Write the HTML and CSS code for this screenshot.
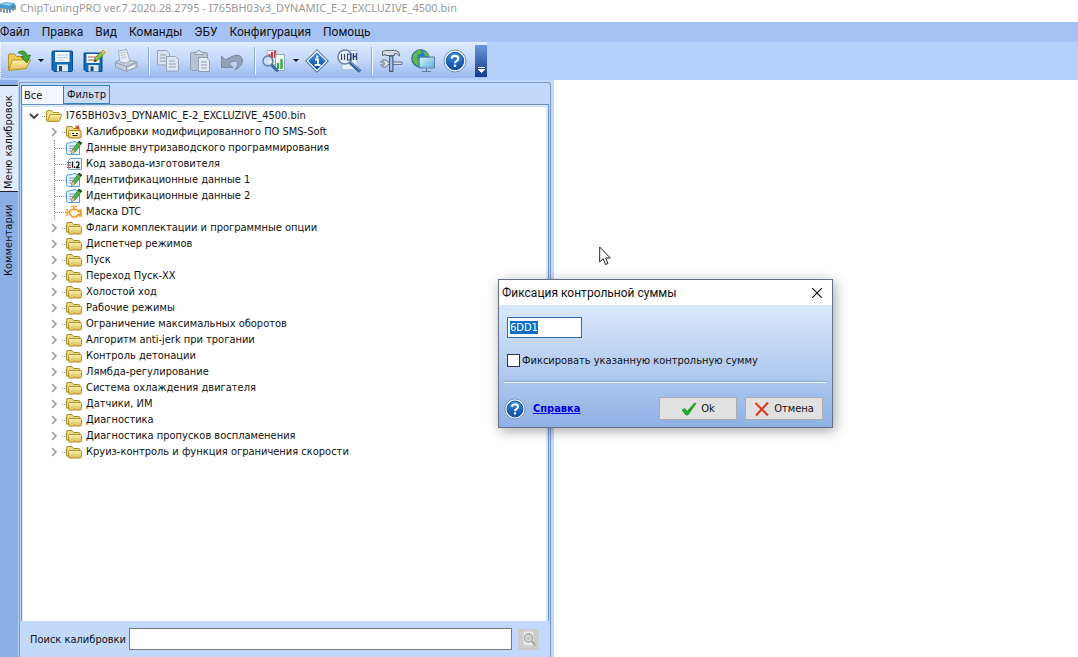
FILE: index.html
```
<!DOCTYPE html>
<html lang="ru">
<head>
  <meta charset="utf-8">
  <title>ChipTuningPRO</title>
  <link rel="stylesheet" href="styles.css">
</head>
<body>

  <!-- shared icons -->
  <svg class="defs" aria-hidden="true">
    <defs>
      <linearGradient id="gFolder" x1="0" y1="0" x2="0" y2="1">
        <stop offset="0" stop-color="#fdf6ae"/>
        <stop offset="1" stop-color="#e0bb4c"/>
      </linearGradient>
      <linearGradient id="gBlue" x1="0" y1="0" x2="0" y2="1">
        <stop offset="0" stop-color="#3c8fdc"/>
        <stop offset="1" stop-color="#0a4aa6"/>
      </linearGradient>
      <linearGradient id="gScreen" x1="0" y1="0" x2="1" y2="1">
        <stop offset="0" stop-color="#d5f0fc"/>
        <stop offset="1" stop-color="#5fb4dc"/>
      </linearGradient>
    </defs>
    <symbol id="folder" viewBox="0 0 16 16">
      <path d="M.5 12V4q0-1.500 1.500-1.500h4l1.500 2h5q1.500 0 1.500 1.500v6z" fill="#f0dc80" stroke="#a38a30"/>
      <path d="M3.500 6.500h11q1 0 1 1v5q0 1.500-1.500 1.500H3.500q-1 0-1-1V7.500q0-1 1-1z" fill="url(#gFolder)" stroke="#a98f35"/>
    </symbol>
    <symbol id="folder-open" viewBox="0 0 16 16">
      <path d="M.5 12.500V4q0-1.500 1.500-1.500h3.500l1.500 2h5q1.500 0 1.500 1.500v2z" fill="#f5e189" stroke="#b1932c"/>
      <path d="M1.500 13.500L4 7q.2-.5 1-.5h10q.8 0 .5.8l-2 5.700q-.2.500-1 .5z" fill="url(#gFolder)" stroke="#b9982c"/>
    </symbol>
    <symbol id="folder-mod" viewBox="0 0 16 16">
      <path d="M.5 12V4q0-1.500 1.500-1.500h4l1.500 2h5q1.500 0 1.500 1.500v6z" fill="#f0dc80" stroke="#a38a30"/>
      <rect x="2.500" y="6.500" width="12.500" height="7.500" rx="1" fill="url(#gFolder)" stroke="#a9862a"/>
      <path d="M5 8h8v4.500H5z" fill="#fff8d8"/>
      <path d="M6 9.500h2M10 9.500h2M6.500 11.500h5" stroke="#222"/>
      <path d="M8.500 1l2 1.500L13 1v4l-2 .5z" fill="#d9402c"/>
    </symbol>
    <symbol id="edit" viewBox="0 0 16 16">
      <path d="M.5 3.500L9 1.500 13.500 4v10.500h-11q-2 0-2-2z" fill="#e4f3fd" stroke="#5a9fd4"/>
      <path d="M3 6h6M3 8.500h4M3 11h3" stroke="#6fa8d2"/>
      <path d="M5.500 13.500l1-4L13 1l3 2-7 9z" fill="#58b043" stroke="#2c6e28" stroke-width=".7"/>
      <path d="M5.500 13.500l1-4L9 12z" fill="#e8c28a"/>
      <path d="M13 .8L16 3l-1.200 1.500-3-2.200z" fill="#24481f"/>
    </symbol>
    <symbol id="num" viewBox="0 0 16 16">
      <path d="M4.500 2.500h11v11h-13v-9z" fill="#eef6fd" stroke="#6da0d0"/>
      <path d="M1 6.500h4" stroke="#3a62a8"/><path d="M1 9h4M1 11.500h4" stroke="#c03838"/>
      <path d="M6.500 5.500v6M8.500 10.500v1.500M10 6.500q3-1.500 3 1T10 11.500h3.500" fill="none" stroke="#111" stroke-width="1.300"/>
    </symbol>
    <symbol id="engine" viewBox="0 0 16 16">
      <path d="M5 2.500h6M8 3v2.500M1 5v7M1 8.500h2.500" stroke="#f2a040" stroke-width="1.500"/>
      <path d="M3.500 7.500l2-2h5l2 2h1V6H15v6h-1.500v-1.500H12L10.500 13h-4l-3-3z" fill="#fff4e0" stroke="#f09a28" stroke-width="1.600"/>
    </symbol>
    <symbol id="help" viewBox="0 0 24 24">
      <circle cx="12" cy="12" r="11" fill="#f4f8fd" stroke="#6f8fb9"/>
      <circle cx="12" cy="12" r="8.700" fill="url(#gBlue)" stroke="#155297"/>
      <path d="M8.700 9.700Q8.800 6.800 12 6.800t3.300 2.700q0 1.500-1.600 2.400T12 14.300" fill="none" stroke="#fff" stroke-width="2.200"/>
      <rect x="10.800" y="15.600" width="2.400" height="2.400" fill="#fff"/>
    </symbol>
    <!-- chevrons with the dotted branch to the folder -->
    <symbol id="right" viewBox="0 0 16 10">
      <path d="M2 1l4 4-4 4" fill="none" stroke="#a0a0a0" stroke-width="1.700"/>
      <path d="M12 5.500h4" stroke="#888" stroke-dasharray="1 1"/>
    </symbol>
    <symbol id="down" viewBox="0 0 17 8">
      <path d="M1 2l4 4 4-4" fill="none" stroke="#404040" stroke-width="1.800"/>
      <path d="M13 4.500h4" stroke="#888" stroke-dasharray="1 1"/>
    </symbol>
  </svg>

  <div class="window">
    <header class="titlebar">
      <svg class="logo" viewBox="0 0 16 16" aria-hidden="true">
        <path d="M0 4l5-2 9 1 2 3-5 4L0 8z" fill="#459bd0"/>
        <path d="M0 4l5-2 9 1-5 3z" fill="#86c9ea"/>
        <path d="M1 8v4M4 8v5M7 9v4M10 9v4M13 7v4M15 6v4" stroke="#4a6b80" stroke-width="1.300"/>
        <path d="M1 9h4" stroke="#d9a832"/>
      </svg>
      <span>ChipTuningPRO ver.7.2020.28.2795 - I765BH03v3_DYNAMIC_E-2_EXCLUZIVE_4500.bin</span>
    </header>

    <nav class="menu">
      <button>Файл</button>
      <button>Правка</button>
      <button>Вид</button>
      <button>Команды</button>
      <button>ЭБУ</button>
      <button>Конфигурация</button>
      <button>Помощь</button>
    </nav>

    <div class="toolbar-row">
      <div class="toolbar">
        <button class="tool" aria-label="Открыть">
          <svg viewBox="0 0 24 24">
            <path d="M1.500 21V6q0-1 1-1h5l2 2.500h8V13" fill="#efcb58" stroke="#b98d2c"/>
            <path d="M1.500 21.500L5.500 11h18l-4.500 8.500z" fill="url(#gFolder)" stroke="#bd8a20"/>
            <path d="M11 3.500q6.500-4 9.500 3l3-.5-3.500 8-6-6 3-.5q-2-3-6-4z" fill="#45a938" stroke="#23751f" stroke-width=".8"/>
          </svg>
        </button>
        <button class="drop" aria-label="Недавние файлы"></button>
        <button class="tool" aria-label="Сохранить">
          <svg viewBox="0 0 24 24">
            <path d="M2 3q0-1 1-1h18.500q1 0 1 1v18.500q0 1-1 1H4l-2-2z" fill="#1269bb" stroke="#0a4a90"/>
            <rect x="5" y="3" width="14.500" height="10" fill="#f5faff"/>
            <path d="M7 6h10.500M7 8.500h10.500M7 11h7" stroke="#a9c6de"/>
            <rect x="7" y="15.500" width="11" height="7" fill="#dfe8ef"/>
            <rect x="9" y="17" width="3" height="5" fill="#154e87"/>
          </svg>
        </button>
        <button class="tool" aria-label="Сохранить как">
          <svg viewBox="0 0 24 24">
            <path d="M2 4h18v18.500H4l-2-2z" fill="#1269bb" stroke="#0a4a90"/>
            <rect x="4.500" y="5" width="13" height="9" fill="#f5faff"/>
            <path d="M6 8h9M6 11h6" stroke="#be5544"/>
            <rect x="6.500" y="16" width="10" height="6.500" fill="#dfe8ef"/>
            <rect x="8.500" y="17.500" width="3" height="4.500" fill="#154e87"/>
            <path d="M12 13l1-4L21 1l2.500 2.500-8 8z" fill="#85c63e" stroke="#68822e" stroke-width=".8"/>
            <path d="M21 1l2.500 2.500-2 2L19 3z" fill="#e6bd49"/>
            <path d="M12 13l.8-3 2 2z" fill="#5c3924"/>
          </svg>
        </button>
        <button class="tool" aria-label="Печать">
          <svg viewBox="0 0 24 24">
            <path d="M1.500 13l6-3.500L23 13v5l-10.500 4.500-11-4.500z" fill="#c3cddb" stroke="#8e9caf"/>
            <path d="M6 13L4.500 2l8-1.500L16 12l-4 2z" fill="#e8edf4" stroke="#a3afbf"/>
            <path d="M6.500 4l5-1M7 6.500l5-1M7.500 9l5-1" stroke="#b6c1cf"/>
            <path d="M1.500 13.500l11 4L23 13.500M12.500 17.500v5" fill="none" stroke="#8e9caf"/>
            <path d="M14.500 19.500l6-2.500" stroke="#f5f8fb" stroke-width="1.500"/>
          </svg>
        </button>
        <span class="sep"></span>
        <button class="tool" aria-label="Копировать">
          <svg viewBox="0 0 24 24" stroke="#94a4ba">
            <path d="M1.500 1.500h9l3 3V16h-12z" fill="#dae2ed"/>
            <path d="M4 6h6M4 9h6M4 12h6"/>
            <path d="M10.500 7.500h9l3 3V22h-12z" fill="#dfe6f0"/>
            <path d="M13 12h6M13 15h7M13 18h7"/>
          </svg>
        </button>
        <button class="tool" aria-label="Вставить">
          <svg viewBox="0 0 24 24" stroke="#909eb1">
            <rect x="2.500" y="3.500" width="17" height="18" rx="1.500" fill="#b8c4d5"/>
            <path d="M7 5.500V3h2q2-3.500 4 0h2v2.500z" fill="#dbe2ec"/>
            <path d="M10.500 8.500h8l3 3v11h-11z" fill="#e5ebf3"/>
            <path d="M13 13h6M13 16h6M13 19h6"/>
          </svg>
        </button>
        <button class="tool" aria-label="Отменить">
          <svg viewBox="0 0 24 24">
            <path d="M1.500 7v11.500h11.500l-4-4q6-4.500 8.500-1 1.500 3-2.500 7.500 8-4 7.500-10.500Q20 1.500 5.500 11z" fill="#93a2b8" stroke="#7889a1"/>
          </svg>
        </button>
        <span class="sep"></span>
        <button class="tool" aria-label="Сравнение">
          <svg viewBox="0 0 24 24">
            <path d="M5 1.500h10v14H5z" fill="#f6ecf0" stroke="#9faec8"/>
            <path d="M7.500 9V5M10 11V3M13 9V2" stroke="#c83846" stroke-width="2"/>
            <path d="M13.500 5.500h9v16h-9z" fill="#f3faf4" stroke="#8caac0"/>
            <path d="M16 20v-6M19.500 20V10" stroke="#38a645" stroke-width="2.400"/>
            <circle cx="6" cy="12" r="5" fill="#cfe3f5" fill-opacity=".7" stroke="#607fa7" stroke-width="1.500"/>
            <path d="M9.500 16l6.500 6.500" stroke="#3c67ac" stroke-width="3"/>
          </svg>
        </button>
        <button class="drop" aria-label="Варианты сравнения"></button>
        <button class="tool" aria-label="Информация">
          <svg viewBox="0 0 24 24">
            <path d="M12 .7L23.300 12 12 23.300.7 12z" fill="#f0f6fd" stroke="#28558b"/>
            <path d="M12 3.200l8.800 8.800-8.800 8.800L3.200 12z" fill="url(#gBlue)"/>
            <path d="M10 10.500h3V16M9.500 16h6" fill="none" stroke="#fff" stroke-width="1.800"/>
            <rect x="11" y="6.500" width="2.300" height="2.300" fill="#fff"/>
          </svg>
        </button>
        <button class="tool" aria-label="Поиск данных">
          <svg viewBox="0 0 24 24">
            <path d="M5 1.500h15v19H5z" fill="#e7f1fb" stroke="#a9c3e0"/>
            <path d="M16.500 4v7M19.500 4v7M16.500 7.500h3" stroke="#244579" stroke-width="1.300"/>
            <circle cx="8" cy="8" r="7" fill="#eaf3fb" stroke="#6b83a6" stroke-width="1.500"/>
            <path d="M4.500 5v6M7.500 5v6M10.500 5h3v6h-3z" fill="none" stroke="#29436e" stroke-width="1.200"/>
            <path d="M13 13.500l10 9" stroke="#345f9f" stroke-width="3.500"/>
            <path d="M13.500 13l9.500 8.500" stroke="#8ab0dd"/>
          </svg>
        </button>
        <span class="sep"></span>
        <button class="tool" aria-label="Настройки">
          <svg viewBox="0 0 24 24">
            <path d="M1.500 13q2-3 5.500-2l2 2h14v2.500H9l-2 2.500q-3.500 1-5.500-2H5v-3z" fill="#d8dfe8" stroke="#6b7788"/>
            <path d="M3.500 6.500v-4l3-1h9q5 0 5 5.500-2-3-5-2.500v2h-9v-1z" fill="#d5dbe3" stroke="#596779"/>
            <path d="M10.500 7h3.500v15.500h-3.500z" fill="#7d9bc6" stroke="#46597a"/>
            <path d="M12 8v13" stroke="#d4e1f2"/>
          </svg>
        </button>
        <button class="tool" aria-label="Сеть">
          <svg viewBox="0 0 24 24">
            <circle cx="9.500" cy="9.500" r="8.800" fill="#1f7fcc" stroke="#23679b"/>
            <path d="M2 6q3-5 8-5l1 3-4 2-1 4 3 3-2 4Q1 14 1.500 9zM12 2q5 1 6 6l-4-1z" fill="#5fb848"/>
            <rect x="8.500" y="8.500" width="14.500" height="10" fill="url(#gScreen)"/>
            <path d="M8 8h15.500v11H8zM15.500 19v3M11 22.500h9" fill="none" stroke="#5d7f9b"/>
          </svg>
        </button>
        <button class="tool" aria-label="Справка"><svg><use href="#help"/></svg></button>
        <button class="more" aria-label="Другие кнопки"></button>
      </div>
    </div>

    <main class="work">
      <div class="side">
        <button class="side-tab active">Меню калибровок</button>
        <button class="side-tab">Комментарии</button>
      </div>

      <section class="panel">
        <div class="tabs">
          <button class="tab active">Все</button>
          <button class="tab">Фильтр</button>
        </div>
        <div class="frame">
          <div class="tree">
            <div class="root"><svg class="chev-down"><use href="#down"/></svg><svg class="ico"><use href="#folder-open"/></svg>I765BH03v3_DYNAMIC_E-2_EXCLUZIVE_4500.bin</div>
            <ul>
              <li><svg class="chev"><use href="#right"/></svg><svg class="ico"><use href="#folder-mod"/></svg>Калибровки модифицированного ПО SMS-Soft</li>
              <li class="leaf"><svg class="ico"><use href="#edit"/></svg>Данные внутризаводского программирования</li>
              <li class="leaf"><svg class="ico"><use href="#num"/></svg>Код завода-изготовителя</li>
              <li class="leaf"><svg class="ico"><use href="#edit"/></svg>Идентификационные данные 1</li>
              <li class="leaf"><svg class="ico"><use href="#edit"/></svg>Идентификационные данные 2</li>
              <li class="leaf"><svg class="ico"><use href="#engine"/></svg>Маска DTC</li>
              <li><svg class="chev"><use href="#right"/></svg><svg class="ico"><use href="#folder"/></svg>Флаги комплектации и программные опции</li>
              <li><svg class="chev"><use href="#right"/></svg><svg class="ico"><use href="#folder"/></svg>Диспетчер режимов</li>
              <li><svg class="chev"><use href="#right"/></svg><svg class="ico"><use href="#folder"/></svg>Пуск</li>
              <li><svg class="chev"><use href="#right"/></svg><svg class="ico"><use href="#folder"/></svg>Переход Пуск-ХХ</li>
              <li><svg class="chev"><use href="#right"/></svg><svg class="ico"><use href="#folder"/></svg>Холостой ход</li>
              <li><svg class="chev"><use href="#right"/></svg><svg class="ico"><use href="#folder"/></svg>Рабочие режимы</li>
              <li><svg class="chev"><use href="#right"/></svg><svg class="ico"><use href="#folder"/></svg>Ограничение максимальных оборотов</li>
              <li><svg class="chev"><use href="#right"/></svg><svg class="ico"><use href="#folder"/></svg>Алгоритм anti-jerk при трогании</li>
              <li><svg class="chev"><use href="#right"/></svg><svg class="ico"><use href="#folder"/></svg>Контроль детонации</li>
              <li><svg class="chev"><use href="#right"/></svg><svg class="ico"><use href="#folder"/></svg>Лямбда-регулирование</li>
              <li><svg class="chev"><use href="#right"/></svg><svg class="ico"><use href="#folder"/></svg>Система охлаждения двигателя</li>
              <li><svg class="chev"><use href="#right"/></svg><svg class="ico"><use href="#folder"/></svg>Датчики, ИМ</li>
              <li><svg class="chev"><use href="#right"/></svg><svg class="ico"><use href="#folder"/></svg>Диагностика</li>
              <li><svg class="chev"><use href="#right"/></svg><svg class="ico"><use href="#folder"/></svg>Диагностика пропусков воспламенения</li>
              <li><svg class="chev"><use href="#right"/></svg><svg class="ico"><use href="#folder"/></svg>Круиз-контроль и функция ограничения скорости</li>
            </ul>
          </div>
        </div>
        <form class="search">
          <label for="search">Поиск калибровки</label>
          <input type="text" id="search" name="search">
          <button type="button" aria-label="Найти">
            <svg viewBox="0 0 16 16">
              <path d="M3 1h9v13H3z" fill="#ececec" stroke="#e4e4e4"/>
              <circle cx="7.500" cy="7" r="4" fill="#dedede" stroke="#a5a5a5" stroke-width="1.300"/>
              <path d="M5.500 6h4M5.500 8h4" stroke="#b5b5b5"/>
              <path d="M10.500 10l4 4.500" stroke="#aaa593" stroke-width="2"/>
            </svg>
          </button>
        </form>
      </section>
      <div class="content"></div>
    </main>
  </div>

  <form class="dialog" role="dialog" aria-labelledby="dlgTitle">
    <div class="dialog-title">
      <span id="dlgTitle">Фиксация контрольной суммы</span>
      <button type="button" aria-label="Закрыть">
        <svg viewBox="0 0 10 10"><path d="M0 0l10 10M10 0L0 10" stroke="#111" stroke-width="1.200"/></svg>
      </button>
    </div>
    <div class="dialog-body">
      <input type="text" class="sum" id="sum" value="6DD1" aria-label="Контрольная сумма">
      <label class="fix"><input type="checkbox" name="fix">Фиксировать указанную контрольную сумму</label>
      <div class="dialog-foot">
        <svg class="help"><use href="#help"/></svg>
        <a href="#">Справка</a>
        <button type="button" class="btn">
          <svg viewBox="0 0 16 16"><path d="M1 9l3-1.500 2 3L13.500 2l1.500.5L7 14H5z" fill="#1eae24" stroke="#128018" stroke-width=".6"/></svg>Ok
        </button>
        <button type="button" class="btn">
          <svg viewBox="0 0 16 16"><path d="M1.500 2L14 14.500M14 1.500L2 14.500" stroke="#d8401f" stroke-width="2.200"/></svg>Отмена
        </button>
      </div>
    </div>
  </form>

  <svg class="cursor" viewBox="0 0 12 20" aria-hidden="true">
    <path d="M.7 1v15l3.500-3.300L6.500 18.500l2.500-1-2.400-5.500h4.700z" fill="#fff" stroke="#222"/>
  </svg>

  <script>
    // the checksum is selected when the dialog opens
    let sum = document.getElementById("sum");
    sum.focus();
    sum.select();
  </script>

</body>
</html>
```

FILE: styles.css
```
* {
  box-sizing: border-box;
}

body {
  margin: 0;
  font-family: "DejaVu Sans Condensed", "DejaVu Sans", sans-serif;
  font-size: 11px;
  color: #111;
}

button, input {
  font: inherit;
  color: inherit;
  margin: 0;
}

button {
  padding: 0;
  border: none;
  background: none;
}

svg {
  display: block;
  flex-shrink: 0;
}

.defs {
  position: absolute;
  width: 0;
  height: 0;
}

.window {
  display: flex;
  flex-direction: column;
  height: 100vh;
  overflow: hidden;
}

.titlebar {
  display: flex;
  align-items: flex-start;
  gap: 4px;
  height: 22px;
  font-family: "Noto Sans", sans-serif;
  font-size: 11px;
  line-height: 15px;
  color: #999;
  background: #fff;
}

.logo {
  width: 16px;
  height: 16px;
}

.menu {
  display: flex;
  gap: 12px;
  height: 20px;
  font-family: Roboto, sans-serif;
  font-size: 12px;
  background: #a7c3f6;
}

.toolbar-row {
  display: flex;
  height: 38px;
  padding-bottom: 2px;
  background: #b4cffa;
}

.toolbar {
  display: flex;
  align-items: center;
  height: 36px;
  padding-left: 6px;
  background: linear-gradient(#dce9fe, #c3d8fa 50%, #98b9ee);
  border-top: 1px solid #e2edff;
  border-left: 1px dotted #fff;
}

.tool {
  width: 24px;
  height: 24px;
  margin-right: 8px;
}

.tool svg {
  width: 24px;
  height: 24px;
}

.drop {
  width: 19px;
  height: 24px;
  margin-left: -8px;
}

.drop::before, .more::before {
  content: "";
  display: block;
  width: 0;
  margin: 0 auto;
  border: 3px solid transparent;
  border-top-color: #111;
  border-bottom: none;
}

.sep {
  width: 2px;
  height: 28px;
  margin: 0 6px 0 2px;
  background: #8fadde;
  border-right: 1px solid #f2f7ff;
}

.more {
  width: 12px;
  height: 32px;
  padding-top: 18px;
  background: linear-gradient(#6d97dc, #3f68b4 50%, #16398a);
}

.more::before {
  width: 7px;
  height: 6px;
  border: none;
  background: linear-gradient(#fff, #fff) top / 100% 1px no-repeat,
    conic-gradient(from -45deg at 50% 100%, #fff 90deg, transparent 0) bottom / 100% 4px no-repeat;
}

.work {
  display: flex;
  flex: 1;
  min-height: 0;
  background: #c3d9fb;
}

.side {
  width: 19px;
  padding-top: 5px;
  background: #8aaee6;
  border-right: 1px solid #b9d0f5;
}

.side-tab {
  display: block;
  width: 18px;
  height: 86px;
  padding: 2px 0;
  line-height: 16px;
  text-align: left;
  writing-mode: vertical-rl;
  transform: rotate(180deg);
  white-space: nowrap;
}

.side-tab.active {
  height: 107px;
  background: #dfeafd;
  border: 1px solid #222;
  border-width: 1px 0;
}

.panel {
  display: flex;
  flex-direction: column;
  width: 532px;
  margin: 2px 3px 0 0;
  padding: 2px 1px 0;
  border: 1px solid #7598cb;
  border-bottom: none;
  border-top-right-radius: 4px;
}

.tabs {
  display: flex;
  height: 19px;
}

.tab {
  width: 47px;
  background: #c9ddfb;
  border: 1px solid #2f80bd;
}

.tab.active {
  width: 42px;
  padding-left: 2px;
  text-align: left;
  background: #f4f8ff;
  border-width: 1px 0 0 1px;
}

.frame {
  display: flex;
  flex: 1;
  min-height: 0;
  padding: 2px 2px 0 1px;
  background: #dbe8fc;
  border: 1px solid #6d90c0;
  border-bottom: none;
}

.tree {
  flex: 1;
  padding-top: 1px;
  background: #fff;
  line-height: 16px;
  overflow: auto;
}

.tree ul {
  list-style: none;
  margin: 0;
  padding: 0 0 0 27px;
}

.tree li, .root {
  display: flex;
  align-items: center;
  height: 16px;
  white-space: nowrap;
}

.root {
  padding-left: 6px;
}

.ico {
  width: 16px;
  height: 16px;
  margin-right: 4px;
}

.chev {
  width: 16px;
  height: 10px;
}

.chev-down {
  width: 17px;
  height: 8px;
}

.leaf {
  margin-left: 4px;
  border-left: 1px dotted #888;
}

.leaf::before {
  content: "";
  width: 11px;
  border-top: 1px dotted #888;
}

.search {
  display: flex;
  align-items: center;
  height: 36px;
  padding: 0 10px 0 9px;
}

.search input {
  flex: 1;
  height: 22px;
  margin: 0 6px 0 3px;
  border: 1px solid #7a7a7a;
  background: #fff;
}

.search button {
  display: flex;
  align-items: center;
  justify-content: center;
  width: 21px;
  height: 21px;
  background: #ccc;
}

.search svg {
  width: 16px;
  height: 16px;
}

.content {
  flex: 1;
  background: #fff;
}

.dialog {
  position: absolute;
  left: 498px;
  top: 279px;
  width: 335px;
  border: 1px solid #667085;
  box-shadow: 2px 3px 12px rgba(0, 0, 0, 0.35);
}

.dialog-title {
  display: flex;
  align-items: center;
  justify-content: space-between;
  height: 25px;
  padding: 0 10px 0 3px;
  font-family: Roboto, sans-serif;
  font-size: 12px;
  background: #fff;
}

.dialog-title svg {
  width: 10px;
  height: 10px;
}

.dialog-body {
  padding: 12px 6px 7px 5px;
  background: linear-gradient(#dae9fc, #8fb1e6);
}

.sum {
  display: block;
  width: 75px;
  height: 21px;
  margin-left: 3px;
  padding: 0 2px;
  border: 1px solid #2e6da8;
  background: #fff;
  outline: none;
}

.sum::selection {
  background: #0a6fc8;
  color: #fff;
}

.fix {
  display: flex;
  align-items: center;
  gap: 2px;
  height: 16px;
  margin: 14px 0 13px 3px;
}

.fix input {
  appearance: none;
  width: 13px;
  height: 13px;
  border: 1px solid #333;
  background: #fff;
}

.dialog-foot {
  display: flex;
  align-items: center;
  padding-top: 15px;
  border-top: 1px solid #8ba9d6;
  box-shadow: inset 0 1px #f6faff;
}

.help {
  width: 22px;
  height: 22px;
  margin-right: 7px;
}

.dialog-foot a {
  flex: 1;
  font-weight: bold;
  color: #0000e0;
}

.btn {
  display: flex;
  align-items: center;
  justify-content: center;
  gap: 4px;
  width: 78px;
  height: 23px;
  margin-right: 3px;
  background: #e1e1e1;
  border: 1px solid #adadad;
}

.btn + .btn {
  margin-left: 5px;
}

.btn svg {
  width: 16px;
  height: 16px;
}

.cursor {
  position: absolute;
  left: 599px;
  top: 246px;
  width: 12px;
  height: 20px;
}
```
